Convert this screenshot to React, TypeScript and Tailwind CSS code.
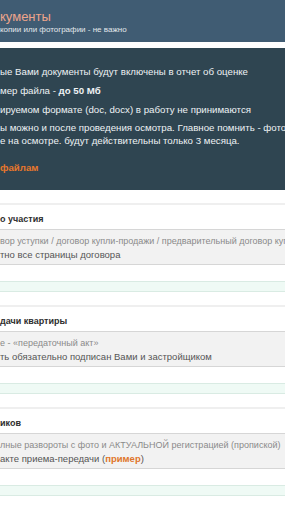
import React from "react";

type DocGroup = {
  label: string;
  hint: string;
  note: React.ReactNode;
};

const groups: DocGroup[] = [
  {
    label: "о участия",
    hint: "вор уступки / договор купли-продажи / предварительный договор купли-продажи",
    note: "тно все страницы договора",
  },
  {
    label: "дачи квартиры",
    hint: "е - «передаточный акт»",
    note: "ть обязательно подписан Вами и застройщиком",
  },
  {
    label: "иков",
    hint: "лные развороты с фото и АКТУАЛЬНОЙ регистрацией (пропиской)",
    note: (
      <>
        акте приема-передачи (<span className="font-bold text-[#e0762c]">пример</span>)
      </>
    ),
  },
];

function Group({ group }: { group: DocGroup }) {
  return (
    <div className="pt-[13px]">
      <div className="h-[2px] bg-[#efefef]" />
      <div className="pt-[7px] pb-[3px] text-[9px] leading-[14px] text-[#2e2e2e] font-bold whitespace-nowrap">
        {group.label}
      </div>
      <div className="border-y border-[#d6d6d6] bg-[#f2f2f2] pt-[5px] pb-[3px] whitespace-nowrap">
        <div className="text-[9px] leading-[13px] text-[#8a8a8a]">{group.hint}</div>
        <div className="text-[9.5px] leading-[13px] text-[#555]">{group.note}</div>
      </div>
      <div className="h-[16px]" />
      <div className="h-[11px] border-y border-[#d9ebe3] bg-[#effaf5]" />
    </div>
  );
}

export default function App() {
  return (
    <div className="w-[285px] h-[506px] overflow-hidden bg-white font-['Liberation_Sans',sans-serif]">
      <header className="h-[42px] bg-[#405c73] pt-[8px] whitespace-nowrap">
        <div className="text-[13px] leading-[17px] text-[#eea58b]">кументы</div>
        <div className="text-[8px] leading-[10px] text-[#e3e8ec]">копии или фотографии - не важно</div>
      </header>

      <section className="mt-[6px] h-[142px] bg-[#2f4551] pt-[17px] text-[9.7px] text-[#eef2f4] whitespace-nowrap">
        <p className="leading-[13px]">ые Вами документы будут включены в отчет об оценке</p>
        <p className="mt-[6px] leading-[13px]">
          мер файла - <span className="font-bold">до 50 Мб</span>
        </p>
        <p className="mt-[6px] leading-[13px]">ируемом формате (doc, docx) в работу не принимаются</p>
        <p className="mt-[5px] leading-[13px]">
          ы можно и после проведения осмотра. Главное помнить - фотографии
          <br />
          е на осмотре. будут действительны только 3 месяца.
        </p>
        <p className="mt-[14px] leading-[13px] font-bold text-[#e8772c]">файлам</p>
      </section>

      {groups.map((g, i) => (
        <Group key={i} group={g} />
      ))}
    </div>
  );
}
